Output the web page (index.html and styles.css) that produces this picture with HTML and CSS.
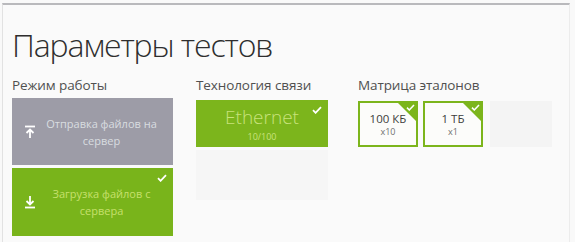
FILE: index.html
```html
<!DOCTYPE html>
<html lang="ru">
<head>
<meta charset="utf-8">
<link rel="stylesheet" href="styles.css">
</head>
<body>
<div class="frame">
  <h1 class="title">Параметры тестов</h1>
  <div class="groups">
    <section class="group group-mode">
      <div class="label">Режим работы</div>
      <div class="tiles-col">
        <div class="tile tile-gray">
          <svg class="tile-icon" viewBox="0 0 12 14" width="12" height="14"><path d="M1 1.5h10" stroke="#fff" stroke-width="1.8" fill="none"/><path d="M6 13V4.5M2.5 8L6 4.5 9.5 8" stroke="#fff" stroke-width="1.8" fill="none"/></svg>
          <span class="tile-text">Отправка файлов на<br>сервер</span>
        </div>
        <div class="tile tile-green">
          <svg class="tile-icon" viewBox="0 0 12 14" width="12" height="14"><path d="M1 12.5h10" stroke="#fff" stroke-width="1.8" fill="none"/><path d="M6 1v8.5M2.5 6L6 9.5 9.5 6" stroke="#fff" stroke-width="1.8" fill="none"/></svg>
          <span class="tile-text">Загрузка файлов с<br>сервера</span>
          <svg class="check" viewBox="0 0 10 8" width="10" height="8"><path d="M1 4.2l2.6 2.6L9 1.2" stroke="#fff" stroke-width="1.8" fill="none"/></svg>
        </div>
      </div>
    </section>
    <section class="group group-tech">
      <div class="label">Технология связи</div>
      <div class="tiles-col">
        <div class="tile tile-eth">
          <span class="eth-name">Ethernet</span>
          <span class="eth-sub">10/100</span>
          <svg class="check" viewBox="0 0 10 8" width="10" height="8"><path d="M1 4.2l2.6 2.6L9 1.2" stroke="#fff" stroke-width="1.8" fill="none"/></svg>
        </div>
        <div class="tile tile-ghost-wide"></div>
      </div>
    </section>
    <section class="group group-matrix">
      <div class="label">Матрица эталонов</div>
      <div class="matrix-row">
        <div class="mtile">
          <span class="m-main">100 КБ</span>
          <span class="m-sub">x10</span>
          <span class="corner"></span>
          <svg class="mcheck" viewBox="0 0 10 8" width="9" height="7"><path d="M1 4.2l2.6 2.6L9 1.2" stroke="#fff" stroke-width="1.8" fill="none"/></svg>
        </div>
        <div class="mtile">
          <span class="m-main">1 ТБ</span>
          <span class="m-sub">x1</span>
          <span class="corner"></span>
          <svg class="mcheck" viewBox="0 0 10 8" width="9" height="7"><path d="M1 4.2l2.6 2.6L9 1.2" stroke="#fff" stroke-width="1.8" fill="none"/></svg>
        </div>
        <div class="mtile-ghost"></div>
      </div>
    </section>
  </div>
</div>
</body>
</html>
```
FILE: styles.css
```css
html, body {
  margin: 0;
  padding: 0;
  background: #f9f9f9;
  width: 575px;
  height: 242px;
  overflow: hidden;
}
.frame {
  margin: 3px 5px 0 2px;
  height: 239px;
  box-sizing: border-box;
  border-top: 2px solid #b9b9bc;
  border-left: 1px solid #e2e2e2;
  border-right: 1px solid #ececec;
  background: #fafafa;
  font-family: "Open Sans", "Noto Sans", sans-serif;
  padding: 0 0 0 9px;
}
.title {
  margin: 0;
  padding-top: 20px;
  font-weight: 300;
  font-size: 32px;
  line-height: 40px;
  color: #2e2e2e;
  letter-spacing: -1.1px;
}
.groups {
  display: flex;
  margin-top: 11px;
}
.label {
  font-size: 13.5px;
  line-height: 18px;
  color: #505050;
  height: 22px;
  letter-spacing: -0.1px;
}
.group-mode { width: 184px; }
.group-tech { width: 162px; }
.tiles-col {
  display: flex;
  flex-direction: column;
  gap: 3px;
}
.tile {
  position: relative;
  display: flex;
  align-items: center;
  box-sizing: border-box;
}
.group-mode .tile {
  width: 161px;
  height: 67px;
  padding-left: 12px;
}
.tile-gray { background: #9d9ca7; }
.tile-green { background: #79b41b; height: 68px !important; }
.tile-icon { flex: none; }
.tile-text {
  flex: 1;
  text-align: center;
  color: #d9dde0;
  font-size: 11px;
  line-height: 17px;
  padding-right: 6px;
}
.tile-green .tile-text { color: #c6e06c; }
.check {
  position: absolute;
  top: 6px;
  right: 6px;
}
.tile-eth {
  width: 132px;
  height: 47px;
  margin-top: 2px;
  background: #7cb51c;
  flex-direction: column;
  justify-content: center;
  color: #c9e37c;
}
.eth-name {
  font-size: 19px;
  line-height: 26px;
  font-weight: 300;
}
.eth-sub {
  font-size: 9px;
  line-height: 13px;
}
.tile-ghost-wide {
  width: 132px;
  height: 50px;
  background: #f6f6f6;
}
.matrix-row {
  display: flex;
  gap: 5px;
  margin-top: 3px;
}
.mtile {
  position: relative;
  width: 60px;
  height: 46px;
  box-sizing: border-box;
  border: 2px solid #7cb51c;
  background: #fcfcfa;
  display: flex;
  flex-direction: column;
  align-items: center;
  justify-content: center;
  overflow: hidden;
}
.m-main {
  font-size: 11.5px;
  line-height: 15px;
  color: #3c3c3c;
}
.m-sub {
  font-size: 9px;
  line-height: 12px;
  color: #707070;
}
.corner {
  position: absolute;
  top: 0;
  right: 0;
  width: 0;
  height: 0;
  border-top: 18px solid #7cb51c;
  border-left: 18px solid transparent;
}
.mcheck {
  position: absolute;
  top: 1px;
  right: 1px;
}
.mtile-ghost {
  width: 62px;
  height: 46px;
  background: #f4f4f4;
  margin-left: 2px;
}
```
